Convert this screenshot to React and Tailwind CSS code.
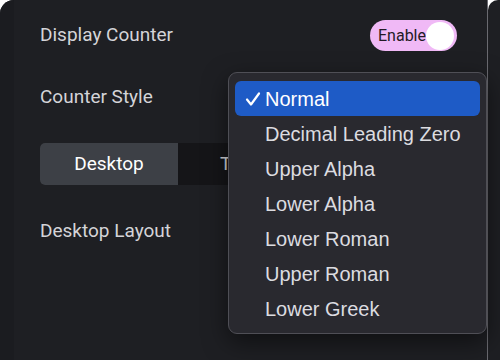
import React from 'react';

const options = [
  'Normal',
  'Decimal Leading Zero',
  'Upper Alpha',
  'Lower Alpha',
  'Lower Roman',
  'Upper Roman',
  'Lower Greek',
];

const Row = ({ label, children, className = '' }) => (
  <div className={`flex items-center justify-between ${className}`}>
    <span className="text-[19px] text-[#d4d4d8]">{label}</span>
    {children}
  </div>
);

const App = () => {
  return (
    <div
      className="relative w-[500px] h-[360px] overflow-hidden bg-white flex"
      style={{ fontFamily: 'Roboto, "Liberation Sans", sans-serif' }}
    >
      {/* settings panel */}
      <div className="w-[487px] h-full bg-[#1e1f23] rounded-tl-[14px] flex">
        <div className="w-[14px] h-full bg-[#1b1c20] rounded-tl-[14px]" />
        <div className="flex-1 pl-[26px] pr-[30px] pt-[20px]">
          <Row label="Display Counter" className="h-[31px]">
            <div className="flex items-center h-[31px] w-[87px] rounded-full bg-[#f0b9f6] pl-[8px] pr-[3px]">
              <span className="text-[16px] text-[#231a25] flex-1">Enable</span>
              <span className="w-[28px] h-[28px] rounded-full bg-white" />
            </div>
          </Row>
          <Row label="Counter Style" className="mt-[31px] h-[31px]" />
          <div className="mt-[30px] flex h-[42px] rounded-[5px] overflow-hidden bg-[#151518] w-[274px]">
            <div className="w-[138px] bg-[#3d4046] flex items-center justify-center text-[19px] text-white">
              Desktop
            </div>
            <div className="flex-1 flex items-center justify-center text-[19px] text-[#d4d4d8]">
              Tablet
            </div>
          </div>
          <Row label="Desktop Layout" className="mt-[31px] h-[31px]" />
        </div>
      </div>
      <div className="w-px h-full bg-[#6a6a70]" />
      <div className="flex-1 h-full bg-[#1e1f23] rounded-tl-[10px]" />

      {/* open select menu */}
      <div
        className="absolute left-[228px] top-[72px] w-[259px] h-[262px] rounded-[9px] bg-[#29292f] border border-[#4f4f56] shadow-[0_8px_24px_rgba(0,0,0,0.5)] px-[6px] pt-[8px]"
        style={{ fontFamily: '"Liberation Sans", Arial, sans-serif' }}
      >
        {options.map((opt, i) => (
          <div
            key={opt}
            className={`h-[35px] flex items-center rounded-[6px] text-[20px] ${
              i === 0 ? 'bg-[#1e5bc6] text-white' : 'text-[#dcdce0]'
            }`}
          >
            <span className="w-[30px] flex justify-center pl-[6px]">
              {i === 0 && (
                <svg width="16" height="16" viewBox="0 0 16 16" fill="none">
                  <path d="M2 8.5 L6 13.5 L14 2.5" stroke="white" strokeWidth="2.2" strokeLinecap="round" strokeLinejoin="round" />
                </svg>
              )}
            </span>
            <span>{opt}</span>
          </div>
        ))}
      </div>
    </div>
  );
};

export default App;
